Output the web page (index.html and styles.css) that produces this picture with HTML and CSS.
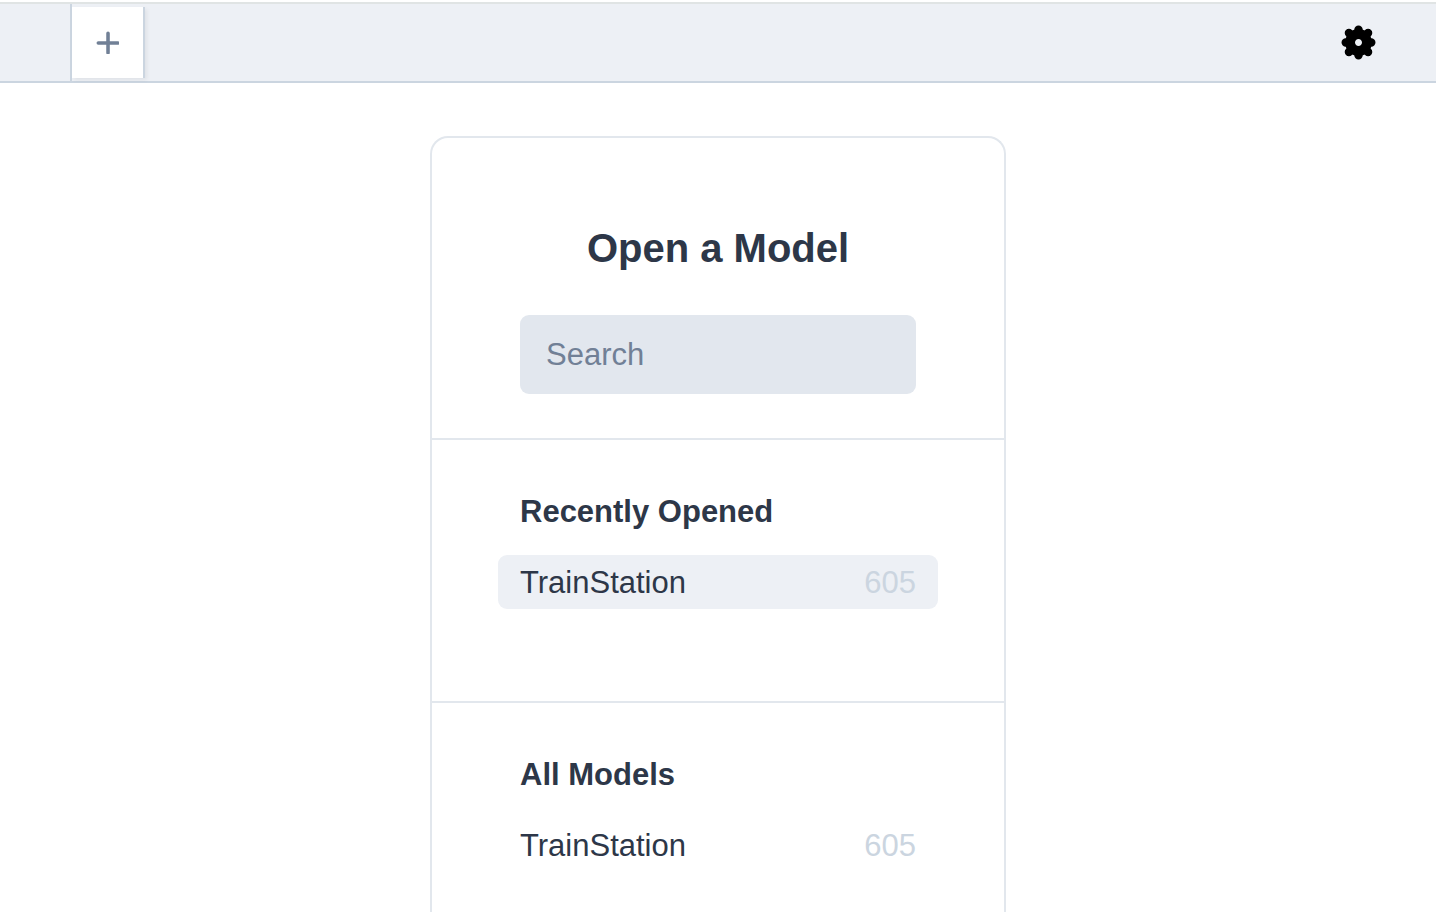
FILE: index.html
```html
<!DOCTYPE html>
<html lang="en">
<head>
  <meta charset="utf-8">
  <meta name="viewport" content="width=device-width, initial-scale=1">
  <title>Open a Model</title>
  <link rel="stylesheet" href="styles.css">
</head>
<body>
  <header class="topbar">
    <button class="tab" type="button" aria-label="New tab">
      <svg class="tab-icon" viewBox="0 0 22 22" aria-hidden="true">
        <path d="M11.5 2.2v18.6M2.2 11.5h18.6" fill="none" stroke="currentColor" stroke-width="3.4" stroke-linecap="round"/>
      </svg>
    </button>
    <button class="settings" type="button" aria-label="Settings">
      <svg class="settings-icon" viewBox="-17 -17 34 34" aria-hidden="true">
        <circle r="8.2" fill="none" stroke="currentColor" stroke-width="9.6"/>
        <path d="M0-8V-12.4M0 8V12.4M-8 0H-12.4M8 0H12.4M-6-6L-9.3-9.3M6-6L9.3-9.3M-6 6L-9.3 9.3M6 6L9.3 9.3" fill="none" stroke="currentColor" stroke-width="8.2" stroke-linecap="round"/>
      </svg>
    </button>
  </header>

  <main class="card">
    <section class="intro">
      <h1 class="title">Open a Model</h1>
      <input class="search" type="search" placeholder="Search" aria-label="Search models">
    </section>
    <section class="group">
      <h2 class="group-title">Recently Opened</h2>
      <a class="model model-active" href="#"><span>TrainStation</span><span class="count">605</span></a>
    </section>
    <section class="group">
      <h2 class="group-title">All Models</h2>
      <a class="model" href="#"><span>TrainStation</span><span class="count">605</span></a>
    </section>
  </main>
</body>
</html>
```
FILE: styles.css
```css
* {
  box-sizing: border-box;
}

body {
  margin: 0;
  padding-top: 2px;
  min-height: 100vh;
  display: flex;
  flex-direction: column;
  background: #fff;
  color: #2d3748;
  font-family: "Liberation Sans", Arial, sans-serif;
  font-size: 31px;
}

.topbar {
  display: flex;
  justify-content: space-between;
  align-items: stretch;
  height: 81px;
  flex-shrink: 0;
  padding: 0 60px 0 70px;
  background: #edf0f5;
  border-top: 2px solid #e0e4e4;
  border-bottom: 2px solid #cbd5e0;
}

.tab {
  display: flex;
  align-items: center;
  padding: 3px 0;
  border: 0;
  border-left: 2px solid #cbd5e0;
  background: none;
  color: #718096;
}

.tab-icon {
  width: 73px;
  height: 71px;
  padding: 24px;
  background: #fff;
  border-right: 2px solid #cbd5e0;
  box-shadow: 2px 2px 4px rgba(0, 0, 0, 0.06);
}

.settings {
  display: flex;
  align-items: center;
  padding: 0;
  border: 0;
  background: none;
  color: #000;
}

.settings-icon {
  width: 35px;
  height: 35px;
}

.card {
  flex: 1 0 auto;
  width: 100%;
  max-width: 576px;
  margin: 53px auto 0;
  border: 2px solid #e2e7ed;
  border-bottom: 0;
  border-radius: 18px 18px 0 0;
}

.intro {
  padding: 88px 88px 44px;
}

.title {
  margin: 0 0 45px;
  font-size: 40px;
  line-height: 44px;
  text-align: center;
}

.search {
  display: block;
  width: 100%;
  height: 79px;
  padding: 0 26px;
  border: 0;
  border-radius: 9px;
  background: #e2e7ee;
  font: inherit;
  color: inherit;
  appearance: none;
}

.search::placeholder {
  color: #718096;
  opacity: 1;
}

.group {
  padding: 44px 66px 92px;
  border-top: 2px solid #e2e7ed;
}

.group:last-child {
  padding-bottom: 32px;
}

.group-title {
  margin: 0 22px 15px;
  font-size: 31px;
  line-height: 56px;
}

.model {
  display: flex;
  justify-content: space-between;
  padding: 2px 22px 0;
  border-radius: 9px;
  line-height: 52px;
  color: inherit;
  text-decoration: none;
}

.model-active {
  background: #edf0f5;
}

.count {
  color: #cbd5e0;
}
```
